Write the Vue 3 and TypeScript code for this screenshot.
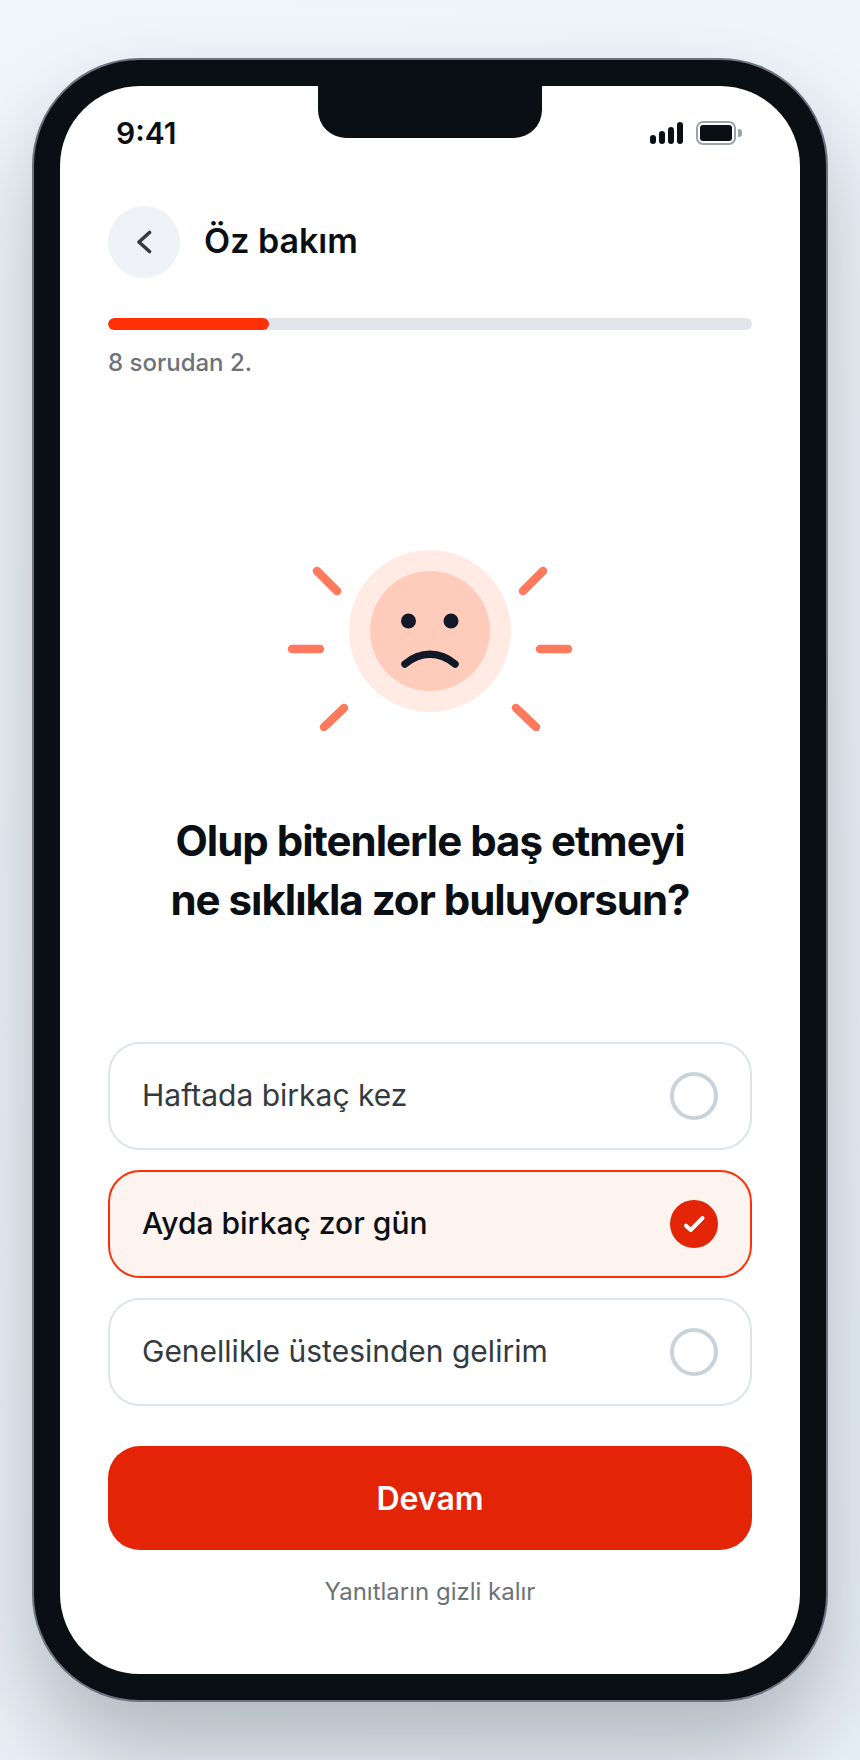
<script setup lang="ts">
// @ts-nocheck
const options = [
  { id: 1, label: 'Haftada birkaç kez', selected: false },
  { id: 2, label: 'Ayda birkaç zor gün', selected: true },
  { id: 3, label: 'Genellikle üstesinden gelirim', selected: false },
]
const signalBars = [9, 13, 17, 22]
const progress = (2 / 8) * 100
</script>

<template>
  <div class="page">
    <div class="phone">
      <div class="screen">
        <div class="notch"></div>

        <!-- status bar -->
        <div class="status">
          <span class="time">9:41</span>
          <div class="status-icons">
            <div class="signal">
              <i v-for="h in signalBars" :key="h" :style="{ height: h + 'px' }"></i>
            </div>
            <div class="battery"><b></b></div>
          </div>
        </div>

        <div class="content">
          <div class="header">
            <button class="back">
              <svg width="20" height="24" viewBox="0 0 20 24" fill="none">
                <path d="M15.5 2.5 L5 12 L15.5 21.5" stroke="#343a40" stroke-width="3.6" stroke-linecap="round" stroke-linejoin="round" />
              </svg>
            </button>
            <h1 class="title">Öz bakım</h1>
          </div>

          <div class="track">
            <div class="fill" :style="{ width: progress + '%' }"></div>
          </div>
          <div class="count">8 sorudan 2.</div>

          <!-- sad face -->
          <svg class="hero" width="300" height="200" viewBox="0 0 300 200" fill="none">
            <circle cx="150" cy="100" r="81" fill="#ffebe4" />
            <circle cx="150" cy="100" r="60" fill="#ffccbc" />
            <circle cx="128.5" cy="90" r="7.5" fill="#111827" />
            <circle cx="171" cy="90" r="7.5" fill="#111827" />
            <path d="M125 133 C140 120 160 120 175 133" stroke="#111827" stroke-width="7.5" stroke-linecap="round" />
            <g stroke="#ff7a5c" stroke-width="8.5" stroke-linecap="round">
              <path d="M37 40 L57 60" />
              <path d="M263 40 L243 60" />
              <path d="M12 118 L40 118" />
              <path d="M260 118 L288 118" />
              <path d="M64 177 L44 196" />
              <path d="M236 177 L256 196" />
            </g>
          </svg>

          <h2 class="question">Olup bitenlerle baş etmeyi<br />ne sıklıkla zor buluyorsun?</h2>

          <div class="options">
            <div v-for="o in options" :key="o.id" class="option" :class="{ active: o.selected }">
              <span class="label">{{ o.label }}</span>
              <span v-if="o.selected" class="tick">
                <svg width="24" height="24" viewBox="0 0 24 24" fill="none">
                  <path d="M4 13.7 L8.7 18 L20.5 6" stroke="#fff" stroke-width="4" stroke-linecap="round" stroke-linejoin="round" />
                </svg>
              </span>
              <span v-else class="radio"></span>
            </div>
          </div>

          <button class="cta">Devam</button>
          <div class="note">Yanıtların gizli kalır</div>
        </div>
      </div>
    </div>
  </div>
</template>

<style>
body { margin: 0; }
</style>

<style scoped>
.page {
  box-sizing: border-box;
  height: 1760px;
  padding: 58px 32px;
  background: linear-gradient(160deg, #f0f6fb 0%, #e8f0f7 100%);
  font-family: Inter, "Noto Sans", sans-serif;
  overflow: hidden;
}
.phone {
  box-sizing: border-box;
  height: 1644px;
  padding: 26px;
  background: #0a0f14;
  border: 2px solid #6b7280;
  border-radius: 108px;
  box-shadow: 0 48px 90px rgba(10, 15, 20, 0.25);
}
.screen {
  position: relative;
  height: 100%;
  background: #fff;
  border-radius: 80px;
  overflow: hidden;
}
.notch {
  position: absolute;
  top: 0;
  left: 258px;
  width: 224px;
  height: 52px;
  background: #0a0f14;
  border-radius: 0 0 28px 28px;
}
.status {
  height: 94px;
  padding: 0 64px 0 56px;
  display: flex;
  align-items: center;
  justify-content: space-between;
}
.time {
  font-size: 30px;
  font-weight: 600;
  color: #0a0f14;
}
.status-icons {
  display: flex;
  align-items: center;
  gap: 13px;
}
.signal {
  display: flex;
  align-items: flex-end;
  gap: 3px;
  height: 22px;
}
.signal i {
  display: block;
  width: 6px;
  border-radius: 3px;
  background: #0a0f14;
}
.battery {
  position: relative;
  box-sizing: border-box;
  width: 40px;
  height: 24px;
  padding: 2px;
  border: 2px solid #9ca3af;
  border-radius: 7px;
}
.battery b {
  display: block;
  height: 100%;
  border-radius: 3px;
  background: #0a0f14;
}
.battery::after {
  content: "";
  position: absolute;
  left: 40px;
  top: 6px;
  width: 4px;
  height: 8px;
  border-radius: 0 3px 3px 0;
  background: #9ca3af;
}
.content {
  padding: 26px 48px 0;
}
.header {
  display: flex;
  align-items: center;
  gap: 24px;
}
.back {
  width: 72px;
  height: 72px;
  padding: 0;
  border: 0;
  border-radius: 50%;
  background: #eef2f6;
  display: flex;
  align-items: center;
  justify-content: center;
}
.title {
  margin: 0 0 3px;
  font-size: 34px;
  font-weight: 600;
  color: #0a0f14;
}
.track {
  height: 12px;
  margin-top: 40px;
  border-radius: 6px;
  background: #e2e6ec;
  overflow: hidden;
}
.fill {
  height: 100%;
  border-radius: 6px;
  background: #ff3008;
}
.count {
  margin-top: 18px;
  font-size: 24px;
  line-height: 30px;
  font-weight: 500;
  color: #6c7278;
}
.hero {
  display: block;
  margin: 153px auto 0;
}
.question {
  margin: 80px 0 0;
  text-align: center;
  font-size: 42px;
  line-height: 59px;
  font-weight: 700;
  letter-spacing: -1px;
  color: #0a0f14;
}
.options {
  margin-top: 113px;
  display: flex;
  flex-direction: column;
  gap: 20px;
}
.option {
  box-sizing: border-box;
  height: 108px;
  padding: 0 32px;
  display: flex;
  align-items: center;
  justify-content: space-between;
  border: 2px solid #dee4ea;
  border-radius: 32px;
  background: #fff;
  font-size: 30px;
  color: #343a40;
}
.label {
  margin-bottom: 2px;
}
.option.active {
  border-color: #ff3008;
  background: #fdf3ef;
  font-weight: 500;
  color: #0a0f14;
}
.radio {
  box-sizing: border-box;
  width: 48px;
  height: 48px;
  border: 4px solid #cbd3da;
  border-radius: 50%;
}
.tick {
  width: 48px;
  height: 48px;
  border-radius: 50%;
  background: #e32406;
  display: flex;
  align-items: center;
  justify-content: center;
}
.cta {
  display: block;
  width: 100%;
  height: 104px;
  margin-top: 40px;
  border: 0;
  border-radius: 32px;
  background: #e32406;
  color: #fff;
  font-family: inherit;
  font-size: 32px;
  font-weight: 600;
}
.note {
  margin-top: 26px;
  text-align: center;
  font-size: 24px;
  line-height: 32px;
  color: #6c7278;
}
</style>
